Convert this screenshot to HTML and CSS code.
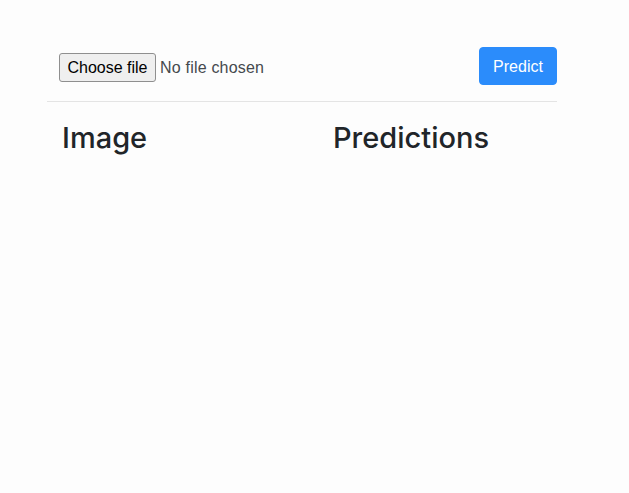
FILE: index.html
```html
<!DOCTYPE html>
<html lang="en">
<head>
<meta charset="utf-8">
<title>Image Predictions</title>
<link rel="stylesheet" href="styles.css">
</head>
<body>
<main class="container">
  <form class="upload-bar">
    <label class="file-field">
      <input class="file-input" type="file" name="image">
      <span class="file-button">Choose file</span>
      <span class="file-name">No file chosen</span>
    </label>
    <button class="predict-btn" type="button">Predict</button>
  </form>
  <section class="results">
    <h2 class="col-title">Image</h2>
    <h2 class="col-title">Predictions</h2>
  </section>
</main>
</body>
</html>
```

FILE: styles.css
```css
html, body {
  margin: 0;
  padding: 0;
  background: #fdfdfd;
}

body {
  font-family: "Liberation Sans", Arial, sans-serif;
  color: #212529;
}

.container {
  width: 510px;
  margin-left: 47px;
  padding-top: 47px;
}

.upload-bar {
  display: flex;
  justify-content: space-between;
  align-items: flex-start;
  padding-bottom: 16px;
  border-bottom: 1px solid #e4e4e4;
  margin: 0;
}

.file-field {
  display: flex;
  align-items: center;
  margin-top: 6px;
  margin-left: 12px;
  cursor: pointer;
}

.file-input {
  display: none;
}

.file-button {
  box-sizing: border-box;
  height: 29px;
  width: 97px;
  padding-top: 1px;
  display: flex;
  align-items: center;
  justify-content: center;
  background: #efefef;
  border: 1px solid #8f8f8f;
  border-radius: 3px;
  font-size: 16px;
  color: #000;
}

.file-name {
  margin-left: 4px;
  padding-top: 1px;
  font-size: 16px;
  letter-spacing: 0.2px;
  color: #45494d;
}

.predict-btn {
  box-sizing: border-box;
  height: 38px;
  width: 78px;
  padding: 1px 0 0 0;
  background: #2b8cfb;
  border: 1px solid #2b8cfb;
  border-radius: 4px;
  color: #fff;
  font-family: "Liberation Sans", Arial, sans-serif;
  font-size: 16px;
  cursor: pointer;
}

.results {
  display: grid;
  grid-template-columns: 271px 1fr;
  padding-left: 15px;
}

.col-title {
  margin: 19px 0 0 0;
  font-family: Inter, "Liberation Sans", sans-serif;
  font-size: 29px;
  font-weight: 500;
  line-height: 1.2;
  color: #212529;
}
```
